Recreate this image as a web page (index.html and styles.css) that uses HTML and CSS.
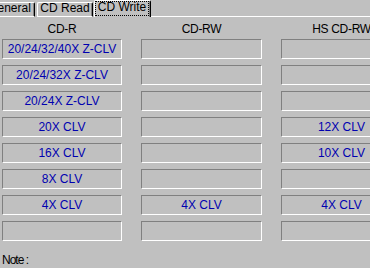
FILE: index.html
```html
<!DOCTYPE html>
<html lang="en">
<head>
    <meta charset="UTF-8">
    <meta name="viewport" content="width=device-width, initial-scale=1.0">
    <title>CD Write</title>
    <link rel="stylesheet" href="styles.css">
</head>
<body>
    <div class="tabs">
        <div class="tab general">General</div>
        <div class="tab read">CD Read</div>
        <div class="tab write active"><span class="focus">CD Write</span></div>
        <div class="tab-fill"></div>
    </div>

    <div class="panel">
        <div class="grid">
            <div class="head">CD-R</div>
            <div class="head">CD-RW</div>
            <div class="head">HS CD-RW</div>

            <div class="box">20/24/32/40X Z-CLV</div>
            <div class="box"></div>
            <div class="box"></div>

            <div class="box">20/24/32X Z-CLV</div>
            <div class="box"></div>
            <div class="box"></div>

            <div class="box">20/24X Z-CLV</div>
            <div class="box"></div>
            <div class="box"></div>

            <div class="box">20X CLV</div>
            <div class="box"></div>
            <div class="box">12X CLV</div>

            <div class="box">16X CLV</div>
            <div class="box"></div>
            <div class="box">10X CLV</div>

            <div class="box">8X CLV</div>
            <div class="box"></div>
            <div class="box"></div>

            <div class="box">4X CLV</div>
            <div class="box">4X CLV</div>
            <div class="box">4X CLV</div>

            <div class="box"></div>
            <div class="box"></div>
            <div class="box"></div>
        </div>

        <p class="note">Note :</p>
    </div>
</body>
</html>
```

FILE: styles.css
```css
html, body {
    margin: 0;
    background-color: #c0c0c0;
    overflow: hidden;
}
body {
    width: 370px;
    height: 268px;
    font-family: "Liberation Sans", Arial, sans-serif;
    font-size: 12px;
    color: #000;
}
.tabs {
    display: flex;
    align-items: flex-end;
    height: 17px;
    margin-left: -16px;
}
.tab {
    box-sizing: border-box;
    height: 15px;
    line-height: 11px;
    border-left: 1px solid #fff;
    border-top: 1px solid #fff;
    border-right: 1px solid #000;
    border-bottom: 1px solid #fff;
    box-shadow: inset -1px 0 0 #808080;
    border-top-left-radius: 2px;
    border-top-right-radius: 2px;
    text-align: center;
    white-space: nowrap;
}
.general {
    width: 51px;
    margin-right: 2px;
}
.read {
    width: 56px;
    margin-right: 1px;
}
.write {
    width: 57px;
}
.tab.active {
    height: 17px;
    border-bottom: none;
}
.focus {
    display: block;
    box-sizing: border-box;
    height: 15px;
    margin-right: 1px;
    line-height: 10px;
    border: 1px dotted #000;
}
.tab-fill {
    flex: 1;
    border-bottom: 1px solid #fff;
}
.panel {
    padding: 5px 0 0 2px;
}
.grid {
    display: grid;
    grid-template-columns: 120px 121px 121px;
    column-gap: 19px;
    row-gap: 6px;
}
.head {
    text-align: center;
    line-height: 14px;
    height: 11px;
    white-space: nowrap;
    letter-spacing: -0.3px;
}
.box {
    box-sizing: border-box;
    height: 20px;
    line-height: 18px;
    border-top: 1px solid #808080;
    border-left: 1px solid #808080;
    border-bottom: 1px solid #fff;
    border-right: 1px solid #fff;
    text-align: center;
    color: #0000b0;
    white-space: nowrap;
}
.note {
    margin: 12px 0 0 0;
    line-height: 14px;
    font-size: 12px;
    letter-spacing: -1px;
}
```
